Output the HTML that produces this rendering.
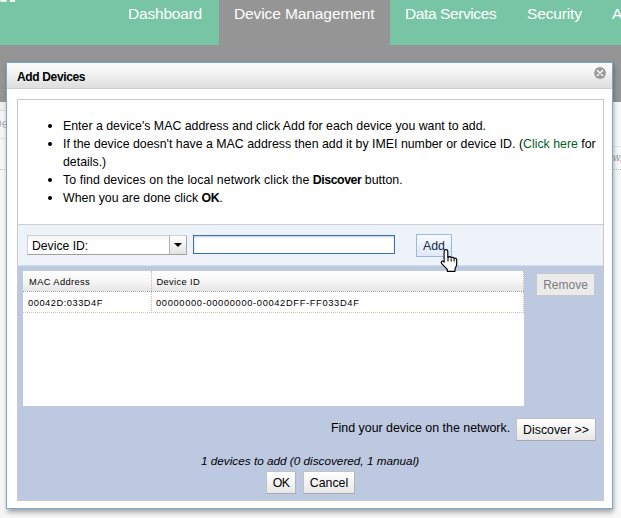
<!DOCTYPE html>
<html>
<head>
<meta charset="utf-8">
<style>
html,body{margin:0;padding:0;}
body{width:621px;height:518px;overflow:hidden;position:relative;background:#f6f6f6;font-family:"Liberation Sans",sans-serif;}
.abs{position:absolute;}
#topgreen{left:0;top:0;width:621px;height:45px;background:#77c5a5;}
#topgray{left:0;top:45px;width:621px;height:57px;background:#959595;}
#tabactive{left:219px;top:0;width:171px;height:45px;background:#959595;}
.nav{top:4px;font-size:15.5px;line-height:20px;color:#fff;white-space:nowrap;}
#dialog{left:6px;top:62px;width:605px;height:445px;background:#fff;border:1px solid #7aa7d0;box-shadow:0.5px 3px 5px rgba(0,0,0,0.36);}
#titlebar{left:0;top:0;width:605px;height:25px;background:linear-gradient(#fcfcfc,#f4f4f4 35%,#dedede);border-bottom:1px solid #cecece;}
#title{left:10px;top:7px;font-size:12px;font-weight:bold;line-height:14px;letter-spacing:-0.35px;color:#000;white-space:nowrap;}
#panel{left:10px;top:36px;width:587px;height:402px;border:1px solid #c8c8c8;background:#fff;box-sizing:border-box;}
#formrow{left:0;top:124px;width:585px;height:42px;background:#eef2f9;border-top:1px solid #cdcfd3;border-bottom:1px solid #d6ddeb;box-sizing:border-box;}
#blue{left:0;top:166px;width:585px;height:234px;background:#bdc9e0;}
.li{left:45px;font-size:12.35px;line-height:18px;color:#000;white-space:nowrap;}
.bul{left:30px;width:4px;height:4px;border-radius:50%;background:#000;}
.btn{box-sizing:border-box;border:1px solid #c2c2c2;border-bottom-color:#a9a9a9;border-right-color:#b4b4b4;background:linear-gradient(#ffffff,#f4f4f4 50%,#e6e6e6);font-size:12.35px;line-height:20px;padding-top:1px;text-align:center;color:#000;white-space:nowrap;height:23px;}
.t10{font-size:9.3px;line-height:12px;color:#000;white-space:nowrap;}
</style>
</head>
<body>
<!-- page background bits -->
<div class="abs" style="left:0;top:102px;width:8px;height:9px;background:#efefef;"></div>
<div class="abs" style="left:0;top:110px;width:8px;height:1px;background:#dadada;"></div>
<div class="abs" style="left:0;top:111px;width:8px;height:27px;background:#f5f5f5;"></div>
<div class="abs" style="left:0;top:138px;width:8px;height:1px;background:#e2e2e2;"></div>
<div class="abs" style="left:612px;top:102px;width:9px;height:416px;background:#f8f8f8;"></div>
<div class="abs" style="left:612px;top:146px;width:9px;height:1px;background:#e4e4e4;"></div>
<div class="abs" style="left:0;top:169px;width:621px;height:0;border-top:1px dotted #b8b8b8;"></div>
<div class="abs" style="left:-7px;top:117px;font-size:12px;line-height:14px;color:#b0b0b0;">De</div>
<div class="abs" style="left:613px;top:152px;font-size:10px;font-style:italic;line-height:12px;color:#999;">w,</div>

<div class="abs" id="topgreen"></div>
<div class="abs" id="topgray"></div>
<div class="abs" id="tabactive"></div>
<div class="abs" style="left:0;top:0;width:7px;height:2px;background:#fff;border-radius:0 0 4px 4px;opacity:.9"></div>
<div class="abs" style="left:10px;top:0;width:5px;height:2px;background:#fff;opacity:.9"></div>
<div class="abs nav" style="left:128px;letter-spacing:-0.2px;">Dashboard</div>
<div class="abs nav" style="left:234px;letter-spacing:-0.1px;">Device Management</div>
<div class="abs nav" style="left:405px;letter-spacing:-0.4px;">Data Services</div>
<div class="abs nav" style="left:527px;letter-spacing:-0.15px;">Security</div>
<div class="abs nav" style="left:612px;">A</div>

<div class="abs" id="dialog">
  <div class="abs" id="titlebar"></div>
  <div class="abs" id="title">Add Devices</div>
  <svg class="abs" style="left:586px;top:3px" width="14" height="14" viewBox="0 0 14 14"><circle cx="7" cy="7" r="5.9" fill="#9a9a9a"/><path d="M4.4 4.4 L9.6 9.6 M9.6 4.4 L4.4 9.6" stroke="#fff" stroke-width="1.35" stroke-linecap="round"/></svg>
  <div class="abs" id="panel">
    <div class="abs bul" style="top:24px"></div>
    <div class="abs bul" style="top:42px"></div>
    <div class="abs bul" style="top:78px"></div>
    <div class="abs bul" style="top:96px"></div>
    <div class="abs li" style="top:17px">Enter a device's MAC address and click Add for each device you want to add.</div>
    <div class="abs li" style="top:35px">If the device doesn't have a MAC address then add it by IMEI number or device ID. (<span style="color:#00602a">Click here</span> for</div>
    <div class="abs li" style="top:53px">details.)</div>
    <div class="abs li" style="top:71px"><span style="letter-spacing:0.075px">To find devices on the local network click the </span><b style="letter-spacing:-0.45px">Discover</b> button.</div>
    <div class="abs li" style="top:89px">When you are done click <b style="letter-spacing:-0.5px">OK</b>.</div>
    <div class="abs" id="formrow"></div>
    <div class="abs" id="blue"></div>

    <!-- select -->
    <div class="abs" style="left:9px;top:135px;width:160px;height:20px;box-sizing:border-box;border:1px solid #cfcfcf;border-right-color:#a8a8a8;border-bottom-color:#a0a0a0;background:linear-gradient(#f6f6f6,#ffffff 35%);"></div>
    <div class="abs" style="left:14px;top:139px;font-size:12.2px;line-height:15px;white-space:nowrap;">Device ID:</div>
    <div class="abs" style="left:151px;top:135px;width:18px;height:20px;box-sizing:border-box;border:1px solid #cfcfcf;border-left-color:#b0b0b0;border-right-color:#a8a8a8;border-bottom-color:#a0a0a0;background:linear-gradient(#ffffff,#f2f2f2 50%,#e2e2e2);"></div>
    <div class="abs" style="left:156px;top:143px;width:0;height:0;border-left:4px solid transparent;border-right:4px solid transparent;border-top:4.5px solid #000;"></div>
    <!-- input -->
    <div class="abs" style="left:175px;top:135px;width:202px;height:19px;box-sizing:border-box;border:1px solid #3e6fa8;background:#fff;box-shadow:inset 0 1px 2px rgba(120,150,190,0.5);"></div>
    <!-- Add -->
    <div class="abs" style="left:398px;top:134px;width:36px;height:23px;box-sizing:border-box;border:1px solid #9db7dc;background:linear-gradient(#f8fbff,#dfe9f7);font-size:12.35px;line-height:20px;padding-top:1px;text-align:center;color:#15274a;">Add</div>

    <!-- table -->
    <div class="abs" style="left:5px;top:171px;width:501px;height:135px;background:#fff;"></div>
    <div class="abs" style="left:5px;top:171px;width:501px;height:20px;background:linear-gradient(#ffffff,#f6f6f6 50%,#e6e6e6);border-bottom:1px dotted #9a9a9a;"></div>
    <div class="abs" style="left:5px;top:212px;width:501px;height:0;border-bottom:1px dotted #cfc8a8;"></div>
    <div class="abs" style="left:133px;top:171px;width:0;height:42px;border-left:1px dotted #c4bc9c;"></div>
    <div class="abs" style="left:505px;top:171px;width:0;height:42px;border-left:1px dotted #c4bc9c;"></div>
    <div class="abs t10" style="left:11px;top:176px;letter-spacing:0.39px;">MAC Address</div>
    <div class="abs t10" style="left:138.4px;top:176px;letter-spacing:0.39px;">Device ID</div>
    <div class="abs t10" style="left:10px;top:197px;letter-spacing:0.52px;">00042D:033D4F</div>
    <div class="abs t10" style="left:138px;top:197px;letter-spacing:0.66px;">00000000-00000000-00042DFF-FF033D4F</div>

    <!-- Remove -->
    <div class="abs btn" style="left:518px;top:173px;width:59px;background:#ebebeb;border-color:#c8c8c8;color:#7b7b7b;font-size:12px;">Remove</div>
    <!-- Find -->
    <div class="abs" style="left:313px;top:320px;font-size:12.4px;line-height:16px;white-space:nowrap;">Find your device on the network.</div>
    <div class="abs btn" style="left:498px;top:318px;width:80px;">Discover >></div>
    <!-- status -->
    <div class="abs" style="left:183px;top:353px;font-size:11.75px;font-style:italic;line-height:16px;white-space:nowrap;">1 devices to add (0 discovered, 1 manual)</div>
    <div class="abs btn" style="left:248px;top:371px;width:30px;letter-spacing:-0.6px;">OK</div>
    <div class="abs btn" style="left:285px;top:371px;width:52px;">Cancel</div>
  </div>
  <!-- cursor -->
  <svg class="abs" style="left:431.7px;top:184.8px" width="22.2" height="26.2" viewBox="0 0 21 25">
    <path d="M6.5 1.5 C7.6 1.5 8.3 2.2 8.3 3.2 L8.3 9 L9 9 C9.3 8 11.2 8 11.6 9.3 C12.2 8.6 14 8.8 14.3 10 C15 9.5 16.8 9.8 16.8 11.2 L16.8 15.5 C16.8 17.5 15.6 18.5 15.2 20 L15.2 22.3 L7.8 22.3 L7.8 20.5 C6.6 19 4.5 17 2.4 14.6 C1.4 13.4 2.9 11.9 4.2 12.9 L4.8 13.5 L4.8 3.2 C4.8 2.2 5.4 1.5 6.5 1.5 Z" fill="#fff" stroke="#000" stroke-width="1.1" stroke-linejoin="round"/>
    <path d="M8.5 9.5 L8.5 13 M11.5 10 L11.5 13 M14.3 10.6 L14.3 13" stroke="#000" stroke-width="1"/>
  </svg>
</div>
</body>
</html>
